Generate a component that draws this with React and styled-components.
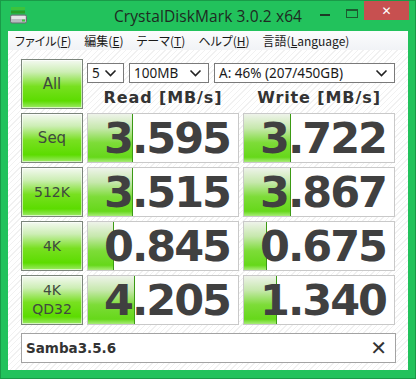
import React from "react"
import styled, { createGlobalStyle } from "styled-components"

const rows = [
    { label: "Seq", read: "3.595", readBar: 45, write: "3.722", writeBar: 47 },
    { label: "512K", read: "3.515", readBar: 45, write: "3.867", writeBar: 47 },
    { label: "4K", read: "0.845", readBar: 26, write: "0.675", writeBar: 23 },
    { label: "4K\nQD32", read: "4.205", readBar: 47, write: "1.340", writeBar: 33 },
]

const menus = [
    ["ファイル(", "F", ")"],
    ["編集(", "E", ")"],
    ["テーマ(", "T", ")"],
    ["ヘルプ(", "H", ")"],
    ["言語(", "L", "anguage)"],
]

const Chevron = () => (
    <svg width="13" height="8" viewBox="0 0 13 8">
        <path d="M1.5 1.5 L6.5 6.5 L11.5 1.5" fill="none" stroke="#222" strokeWidth="1.6" />
    </svg>
)

const DriveIcon = () => (
    <svg width="17" height="17" viewBox="0 0 17 17">
        <rect x="1" y="0" width="14" height="3" fill="#3cc43c" />
        <rect x="1" y="3.5" width="14" height="3" fill="#2aa02a" />
        <rect x="0.5" y="8" width="16" height="8" rx="1.5" fill="#b8bcc0" stroke="#6a6e72" />
        <rect x="1.5" y="9" width="14" height="3" fill="#e4e6e8" />
        <rect x="12" y="12.5" width="3" height="2" fill="#3cc43c" />
    </svg>
)

const Select = ({ width, children }) => (
    <SelectBox style={{ width }}>
        <span>{children}</span>
        <Chevron />
    </SelectBox>
)

const Result = ({ value, bar }) => (
    <ResultBox>
        <Bar style={{ width: bar }} />
        <Value>{value}</Value>
    </ResultBox>
)

const App = () => {
    return (
        <>
            <GlobalStyle />
            <Window>
                <TitleBar>
                    <IconSlot><DriveIcon /></IconSlot>
                    <Title>CrystalDiskMark 3.0.2 x64</Title>
                    <Controls>
                        <Minimize />
                        <Maximize />
                        <Close>✕</Close>
                    </Controls>
                </TitleBar>
                <MenuBar>
                    {menus.map(([a, key, b]) => (
                        <MenuItem key={a}>{a}<u>{key}</u>{b}</MenuItem>
                    ))}
                </MenuBar>
                <Client>
                    <Grid>
                        <TestButton>All</TestButton>
                        <HeadArea>
                            <Selects>
                                <Select width={37}>5</Select>
                                <Select width={80}>100MB</Select>
                                <Select width={181}>A: 46% (207/450GB)</Select>
                            </Selects>
                            <Headers>
                                <Header>Read [MB/s]</Header>
                                <Header>Write [MB/s]</Header>
                            </Headers>
                        </HeadArea>
                        {rows.map((r) => (
                            <React.Fragment key={r.label}>
                                <TestButton small={r.label !== "Seq"}>{r.label}</TestButton>
                                <Result value={r.read} bar={r.readBar} />
                                <Result value={r.write} bar={r.writeBar} />
                            </React.Fragment>
                        ))}
                    </Grid>
                    <Comment>
                        <span>Samba3.5.6</span>
                        <ClearX>✕</ClearX>
                    </Comment>
                </Client>
            </Window>
        </>
    )
}

const GlobalStyle = createGlobalStyle`
    html, body { margin: 0; padding: 0; background: #fff; }
    * { box-sizing: border-box; }
`

const Window = styled.div`
    width: 416px;
    height: 379px;
    background: #22c25c;
    border: 1px solid #1a9a48;
    padding: 0 7px 8px 7px;
    display: flex;
    flex-direction: column;
    font-family: "DejaVu Sans", sans-serif;
`

const TitleBar = styled.div`
    height: 30px;
    display: grid;
    grid-template-columns: 1fr auto 1fr;
    align-items: start;
`

const IconSlot = styled.div`
    padding: 6px 0 0 2px;
    display: flex;
`

const Title = styled.div`
    font-family: "Open Sans", "Noto Sans", sans-serif;
    font-size: 15.5px;
    color: #1e2a22;
    padding-top: 4px;
    letter-spacing: 0.1px;
`

const Controls = styled.div`
    display: flex;
    justify-content: flex-end;
    align-items: flex-start;
    margin-right: -1px;
`

const Minimize = styled.div`
    width: 10px;
    height: 2px;
    background: #1d3a26;
    margin: 13px 16px 0 0;
`

const Maximize = styled.div`
    width: 12px;
    height: 9px;
    border: 1px solid #1d5a30;
    border-top-width: 2px;
    margin: 8px 6px 0 0;
`

const Close = styled.div`
    width: 45px;
    height: 19px;
    background: #c75050;
    color: #fff;
    font-size: 12px;
    font-weight: bold;
    display: flex;
    align-items: center;
    justify-content: center;
`

const MenuBar = styled.div`
    height: 19px;
    background: linear-gradient(#fbfcfd, #f1f3f6);
    display: flex;
    align-items: center;
    padding-left: 7px;
    gap: 13px;
`

const MenuItem = styled.span`
    font-family: "Noto Sans CJK JP", sans-serif;
    font-feature-settings: "palt";
    font-size: 12px;
    color: #1a1a1a;
    line-height: 19px;
    u { text-decoration-thickness: 1px; text-underline-offset: 1px; }
`

const Client = styled.div`
    flex: 1;
    background: repeating-linear-gradient(135deg, #ffffff 0 3px, #f1f1f1 3px 4px);
    padding: 9px 12px 0 13px;
`

const Grid = styled.div`
    display: grid;
    grid-template-columns: 62px 152px 152px;
    grid-auto-rows: 50px;
    gap: 4px;
`

const TestButton = styled.div`
    border: 1px solid #7b857b;
    box-shadow: inset 0 0 0 1px rgba(255, 255, 255, 0.6);
    background: linear-gradient(#f4f9f1 0%, #cdeeb5 25%, #78e020 55%, #5cdc00 85%, #9eea68 100%);
    display: flex;
    align-items: center;
    justify-content: center;
    text-align: center;
    white-space: pre-line;
    color: #3f4a3f;
    font-size: ${(p) => (p.small ? "14px" : "15px")};
    line-height: 19px;
`

const HeadArea = styled.div`
    grid-column: span 2;
    display: flex;
    flex-direction: column;
`

const Selects = styled.div`
    display: flex;
    gap: 5px;
    margin-top: 4px;
`

const SelectBox = styled.div`
    height: 20px;
    background: #fff;
    border: 1px solid #7a7a7a;
    display: flex;
    align-items: center;
    justify-content: space-between;
    padding: 0 6px 0 4px;
    font-family: "Noto Sans", sans-serif;
    font-size: 13.5px;
    color: #1a1a1a;
`

const Headers = styled.div`
    display: grid;
    grid-template-columns: 152px 152px;
    gap: 4px;
    margin-top: 5px;
`

const Header = styled.div`
    text-align: center;
    font-weight: bold;
    font-size: 16px;
    letter-spacing: 0.9px;
    color: #333;
    line-height: 20px;
`

const ResultBox = styled.div`
    position: relative;
    background: #fff;
    border: 1px solid #c9c9c9;
    overflow: hidden;
    display: flex;
    align-items: center;
    justify-content: flex-end;
    padding-right: 8px;
`

const Bar = styled.div`
    position: absolute;
    left: 0;
    top: 0;
    bottom: 0;
    background: linear-gradient(#eef3ea 0%, #c6e8ac 30%, #7ddc38 60%, #66d81a 90%, #a8ec78 100%);
    border-right: 1px solid #3b9a14;
`

const Value = styled.span`
    position: relative;
    font-weight: bold;
    font-size: 43px;
    letter-spacing: -2px;
    color: #404040;
    line-height: 48px;
`

const Comment = styled.div`
    margin-top: 8px;
    height: 30px;
    background: #fff;
    border: 1px solid #a3a3a3;
    display: flex;
    align-items: center;
    justify-content: space-between;
    padding: 0 8px 0 4px;
    font-weight: bold;
    font-size: 13.5px;
    color: #333;
`

const ClearX = styled.span`
    font-weight: normal;
    font-size: 20px;
    color: #333;
`

export default App
